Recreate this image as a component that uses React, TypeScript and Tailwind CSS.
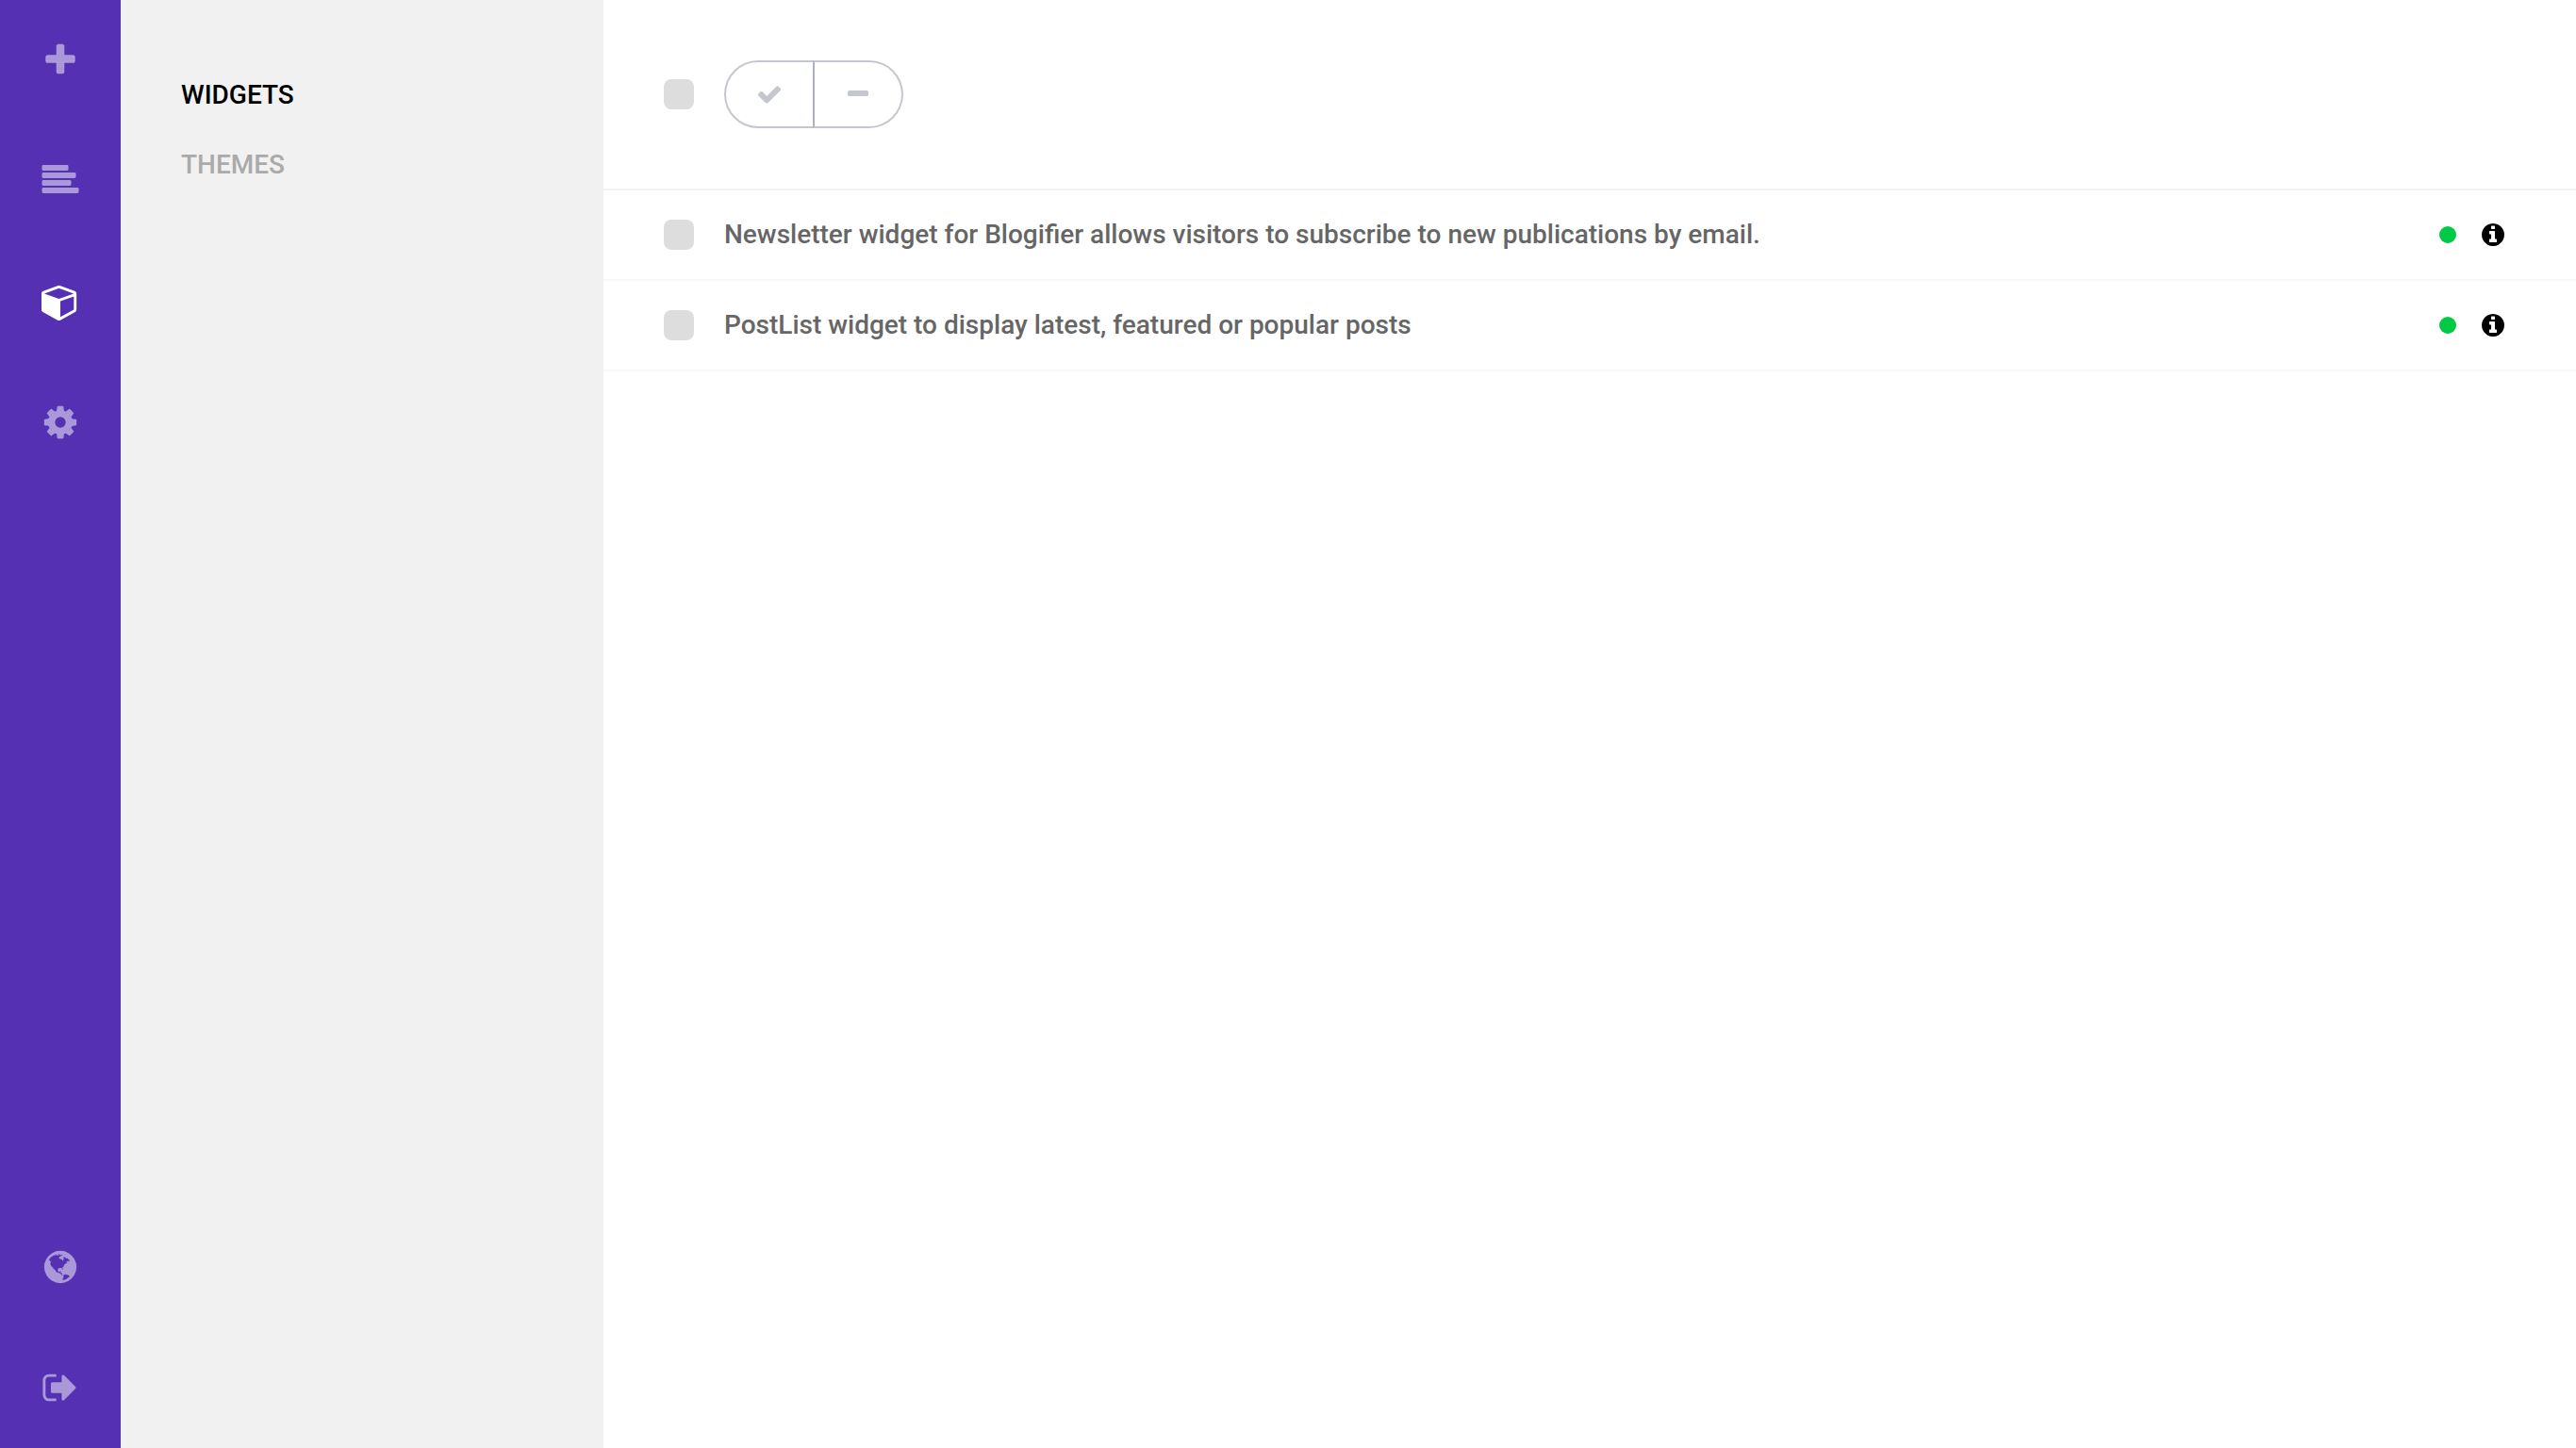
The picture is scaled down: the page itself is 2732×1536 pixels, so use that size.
import React from 'react';

const icons = {
  plus: 'M1600 736v192q0 40-28 68t-68 28h-416v416q0 40-28 68t-68 28h-192q-40 0-68-28t-28-68v-416h-416q-40 0-68-28t-28-68v-192q0-40 28-68t68-28h416v-416q0-40 28-68t68-28h192q40 0 68 28t28 68v416h416q40 0 68 28t28 68z',
  cube: 'M896 1629l640-349v-636l-640 233v752zm-64-865l698-254-698-254-698 254zm832-252v768q0 35-18 65t-49 47l-704 384q-28 16-61 16t-61-16l-704-384q-31-17-49-47t-18-65v-768q0-40 23-73t61-47l704-256q22-8 44-8t44 8l704 256q38 14 61 47t23 73z',
  cog: 'M1152 896q0-106-75-181t-181-75-181 75-75 181 75 181 181 75 181-75 75-181zm512-109v222q0 12-8 23t-20 13l-185 28q-19 54-39 91 35 50 107 138 10 12 10 25t-9 23q-27 37-99 108t-94 71q-12 0-26-9l-138-108q-44 23-91 38-16 136-29 186-7 28-36 28h-222q-14 0-24.5-8.5t-11.5-21.5l-28-184q-49-16-90-37l-141 107q-10 9-25 9-14 0-25-11-126-114-165-168-7-10-7-23 0-12 8-23 15-21 51-66.5t54-70.5q-27-50-41-99l-183-27q-13-2-21-12.5t-8-23.5v-222q0-12 8-23t19-13l186-28q14-46 39-92-40-57-107-138-10-12-10-24 0-10 9-23 26-36 98.5-107.5t94.5-71.5q13 0 26 10l138 107q44-23 91-38 16-136 29-186 7-28 36-28h222q14 0 24.5 8.5t11.5 21.5l28 184q49 16 90 37l142-107q9-9 24-9 13 0 25 10 129 119 165 170 7 8 7 22 0 12-8 23-15 21-51 66.5t-54 70.5q26 50 41 98l183 28q13 2 21 12.5t8 23.5z',
  globe: 'M896 128q209 0 385.5 103t279.5 279.5 103 385.5-103 385.5-279.5 279.5-385.5 103-385.5-103-279.5-279.5-103-385.5 103-385.5 279.5-279.5 385.5-103zm274 521q-2 1-9.5 9.5t-13.5 9.5q2 0 4.5-5t5-11 3.5-7q6-7 22-15 14-6 52-12 34-8 51 11-2-2 9.5-13t14.5-12q3-2 15-4.5t15-7.5l2-22q-12 1-17.5-7t-6.5-21q0 2-6 8 0-7-4.5-8t-11.5 1-9 1q-10-3-15-7.5t-8-16.5-4-15q-2-5-9.5-11t-9.5-10q-1-2-2.5-5.5t-3-6.5-4-5.5-5.5-2.5-7 5-7.5 10-4.5 5q-3-2-6-1.5t-4.5 1-4.5 3-5 3.5q-3 2-8.5 3t-8.5 2q15-5-1-11-10-4-16-3 9-4 7.5-12t-8.5-14h5q-1-4-8.5-8.5t-17.5-8.5-13-6q-8-5-34-9.5t-33-.5q-5 6-4.5 10.5t4 14 3.5 12.5q1 6-5.5 13t-6.5 12q0 7 14 15.5t10 21.5q-3 8-16 16t-16 12q-5 8-1.5 18.5t10.5 16.5q2 2 1.5 4t-3.5 4.5-5.5 4-6.5 3.5l-3 2q-11 5-20.5-6t-13.5-26q-7-25-16-30-23-8-29 1-5-13-41-26-25-9-58-4 6-1 0-15-7-15-19-12 3-6 4-17.5t1-13.5q3-13 12-23 1-1 7-8.5t9.5-13.5.5-6q35 4 50-11 5-5 11.5-17t10.5-17q9-6 14-5.5t14.5 5.5 14.5 5q14 1 15.5-11t-7.5-20q12 1 3-17-4-7-8-9-12-4-27 5-8 4 2 8-1-1-9.5 10.5t-16.5 17.5-16-5q-1-1-5.5-13.5t-9.5-13.5q-8 0-16 15 3-8-11-15t-24-8q19-12-8-27-7-4-20.5-5t-19.5 4q-5 7-5.5 11.5t5 8 10.5 5.5 11.5 4 8.5 3q14 10 8 14-2 1-8.5 3.5t-11.5 4.5-6 4q-3 4 0 14t-2 14q-5-5-9-17.5t-7-16.5q7 9-25 6l-10-1q-4 0-16 2t-20.5 1-13.5-8q-4-8 0-20 1-4 4-2-4-3-11-9.5t-10-8.5q-46 15-94 41 6 1 12-1 5-2 13-6.5t10-5.5q34-14 42-7l5-5q14 16 20 25-7-4-30-1-20 6-22 12 7 12 5 18-4-3-11.5-10t-14.5-11-15-5q-16 0-22 1-146 80-235 222 7 7 12 8 4 1 5 9t2.5 11 11.5-3q9 8 3 19 1-1 44 27 19 17 21 21 3 11-10 18-1-2-9-9t-9-4q-3 5 .5 18.5t10.5 12.5q-7 0-9.5 16t-2.5 35.5-1 23.5l2 1q-3 12 5.5 34.5t21.5 19.5q-13 3 20 43 6 8 8 9 3 2 12 7.5t15 10 10 10.5q4 5 10 22.5t14 23.5q-2 6 9.5 20t10.5 23q-1 0-2.5 1t-2.5 1q3 7 15.5 14t15.5 13q1 3 2 10t3 11 8 2q2-20-24-62-15-25-17-29-3-5-5.5-15.5t-4.5-14.5q2 0 6 1.5t8.5 3.5 7.5 4 2 3q-3 7 2 17.5t12 18.5 17 19 12 13q6 6 14 19.5t0 13.5q9 0 20 10t17 20q5 8 8 26t5 24q2 7 8.5 13.5t12.5 9.5l16 8 13 7q5 2 18.5 10.5t21.5 11.5q10 4 16 4t14.5-2.5 13.5-3.5q15-2 29 15t21 21q36 19 55 11-2 1 .5 7.5t8 15.5 9 14.5 5.5 8.5q5 6 18 15t18 15q6-4 7-9-3 8 7 20t18 10q14-3 14-32-31 15-49-18 0-1-2.5-5.5t-4-8.5-2.5-8.5 0-7.5 5-3q9 0 10-3.5t-2-12.5-4-13q-1-8-11-20t-12-15q-5 9-16 8t-16-9q0 1-1.5 5.5t-1.5 6.5q-13 0-15-1 1-3 2.5-17.5t3.5-22.5q1-4 5.5-12t7.5-14.5 4-12.5-4.5-9.5-17.5-2.5q-19 1-26 20-1 3-3 10.5t-5 11.5-9 7q-7 3-24 2t-24-5q-13-8-22.5-29t-9.5-37q0-10 2.5-26.5t3-25-5.5-24.5q3-2 9-9.5t10-10.5q2-1 4.5-1.5t4.5 0 4-1.5 3-6q-1-1-4-3-3-3-4-3 7 3 28.5-1.5t27.5 1.5q15 11 22-2 0-1-2.5-9.5t-.5-13.5q5 27 29 9 3 3 15.5 5t17.5 5q3 2 7 5.5t5.5 4.5 5-.5 8.5-6.5q10 14 12 24 11 40 19 44 7 3 11 2t4.5-9.5 0-14-1.5-12.5l-1-8v-18l-1-8q-15-3-18.5-12t1.5-18.5 15-18.5q1-1 8-3.5t15.5-6.5 12.5-8q21-19 15-35 7 0 11-9-1 0-5-3t-7.5-5-4.5-2q9-5 2-16 5-3 7.5-11t7.5-10q9 12 21 2 7-8 1-16 5-7 20.5-10.5t18.5-9.5q7 2 8-2t1-12 3-12q4-5 15-9t13-5l17-11q3-4 0-4 18 2 31-11 10-11-6-20 3-6-3-9.5t-15-5.5q3-1 11.5-.5t10.5-1.5q15-10-7-16-17-5-43 12zm-163 877q206-36 351-189-3-3-12.5-4.5t-12.5-3.5q-18-7-24-8 1-7-2.5-13t-8-9-12.5-8-11-7q-2-2-7-6t-7-5.5-7.5-4.5-8.5-2-10 1l-3 1q-3 1-5.5 2.5t-5.5 3-4 3 0 2.5q-21-17-36-22-5-1-11-5.5t-10.5-7-10-1.5-11.5 7q-5 5-6 15t-2 13q-7-5 0-17.5t2-18.5q-3-6-10.5-4.5t-12 4.5-11.5 8.5-9 6.5-8.5 5.5-8.5 7.5q-3 4-6 12t-5 11q-2-4-11.5-6.5t-9.5-5.5q2 10 4 35t5 38q7 31-12 48-27 25-29 40-4 22 12 26 0 7-8 20.5t-7 21.5q0 6 2 16z',
  signOut: 'M704 1440q0 4 1 20t.5 26.5-3 23.5-10 19.5-20.5 6.5h-320q-119 0-203.5-84.5t-84.5-203.5v-704q0-119 84.5-203.5t203.5-84.5h320q13 0 22.5 9.5t9.5 22.5q0 4 1 20t.5 26.5-3 23.5-10 19.5-20.5 6.5h-320q-66 0-113 47t-47 113v704q0 66 47 113t113 47h312l11.5 1 11.5 3 8 5.5 7 9 2 13.5zm928-544q0 26-19 45l-544 544q-19 19-45 19t-45-19-19-45v-288h-448q-26 0-45-19t-19-45v-384q0-26 19-45t45-19h448v-288q0-26 19-45t45-19 45 19l544 544q19 19 19 45z',
  check: 'M1671 566q0 40-28 68l-724 724-136 136q-28 28-68 28t-68-28l-136-136-362-362q-28-28-28-68t28-68l136-136q28-28 68-28t68 28l294 295 656-657q28-28 68-28t68 28l136 136q28 28 28 68z',
  minus: 'M1600 736v192q0 40-28 68t-68 28h-1216q-40 0-68-28t-28-68v-192q0-40 28-68t68-28h1216q40 0 68 28t28 68z',
  info: 'M1152 1376v-160q0-14-9-23t-23-9h-96v-512q0-14-9-23t-23-9h-320q-14 0-23 9t-9 23v160q0 14 9 23t23 9h96v320h-96q-14 0-23 9t-9 23v160q0 14 9 23t23 9h448q14 0 23-9t9-23zm-128-896v-160q0-14-9-23t-23-9h-192q-14 0-23 9t-9 23v160q0 14 9 23t23 9h192q14 0 23-9t9-23zm640 416q0 209-103 385.5t-279.5 279.5-385.5 103-385.5-103-279.5-279.5-103-385.5 103-385.5 279.5-279.5 385.5-103 385.5 103 279.5 279.5 103 385.5z',
};

function Icon({ name, className }: { name: keyof typeof icons; className: string }) {
  return (
    <svg viewBox="0 0 1792 1792" fill="currentColor" aria-hidden="true" className={className}>
      <path d={icons[name]} />
    </svg>
  );
}

function PostsIcon() {
  return (
    <svg viewBox="0 0 40 40" fill="currentColor" aria-hidden="true" className="size-10">
      <rect x="0.5" y="3" width="28" height="6" rx="1.4" />
      <rect x="0.5" y="11" width="36" height="6" rx="1.4" />
      <rect x="0.5" y="19" width="31" height="6" rx="1.4" />
      <rect x="0.5" y="27" width="39" height="6" rx="1.4" />
    </svg>
  );
}

function NavLink({ label, active, children }: { label: string; active?: boolean; children: React.ReactNode }) {
  return (
    <a
      href="#"
      aria-label={label}
      className={`flex size-32 items-center justify-center ${active ? 'text-white' : 'text-white/50'}`}
    >
      {children}
    </a>
  );
}

function Checkbox({ id, label }: { id: string; label?: string }) {
  return (
    <input
      id={id}
      type="checkbox"
      aria-label={label}
      className="size-8 shrink-0 appearance-none rounded-lg bg-[#dddddd] checked:bg-[#5630b3]"
    />
  );
}

const widgets = [
  { id: 'newsletter', text: 'Newsletter widget for Blogifier allows visitors to subscribe to new publications by email.' },
  { id: 'postlist', text: 'PostList widget to display latest, featured or popular posts' },
];

export default function App() {
  return (
    <div className="flex min-h-screen bg-white font-['Roboto',sans-serif] text-[28px] leading-[42px] font-medium">
      <nav aria-label="Main" className="flex w-32 shrink-0 flex-col bg-[#5630b3]">
        <NavLink label="New post"><Icon name="plus" className="size-10" /></NavLink>
        <NavLink label="Posts"><PostsIcon /></NavLink>
        <NavLink label="Widgets" active><Icon name="cube" className="size-10" /></NavLink>
        <NavLink label="Settings"><Icon name="cog" className="size-10" /></NavLink>
        <div className="mt-auto">
          <NavLink label="View site"><Icon name="globe" className="size-10" /></NavLink>
          <NavLink label="Sign out"><Icon name="signOut" className="size-10" /></NavLink>
        </div>
      </nav>

      <aside className="flex w-[512px] shrink-0 flex-col gap-8 bg-[#f1f1f1] px-16 pt-20">
        <a href="#" className="text-black">WIDGETS</a>
        <a href="#" className="text-[#aaaaaa]">THEMES</a>
      </aside>

      <main className="min-w-0 flex-1">
        <header className="flex items-center gap-8 border-b-2 border-[#f1f1f1] px-16 py-16">
          <Checkbox id="select-all" label="Select all widgets" />
          <div className="flex">
            <button
              type="button"
              aria-label="Enable"
              className="flex h-[72px] w-24 items-center justify-center rounded-l-full border-2 border-[#c4c7ce] text-[#c4c7ce]"
            >
              <Icon name="check" className="size-7" />
            </button>
            <button
              type="button"
              aria-label="Disable"
              className="-ml-0.5 flex h-[72px] w-24 items-center justify-center rounded-r-full border-2 border-[#c4c7ce] border-l-[#adb1b9] text-[#c4c7ce]"
            >
              <Icon name="minus" className="size-7" />
            </button>
          </div>
        </header>

        <ul>
          {widgets.map((w) => (
            <li key={w.id} className="flex h-24 items-center gap-8 border-b-2 border-[#f7f7f7] pr-[74px] pl-16">
              <Checkbox id={w.id} />
              <label htmlFor={w.id} className="min-w-0 flex-1 text-[#666666]">{w.text}</label>
              <span role="img" aria-label="Enabled" className="size-[18px] rounded-full bg-[#00c946]" />
              <button type="button" aria-label="Details" className="-ml-[7px] text-black">
                <Icon name="info" className="size-7" />
              </button>
            </li>
          ))}
        </ul>
      </main>
    </div>
  );
}
